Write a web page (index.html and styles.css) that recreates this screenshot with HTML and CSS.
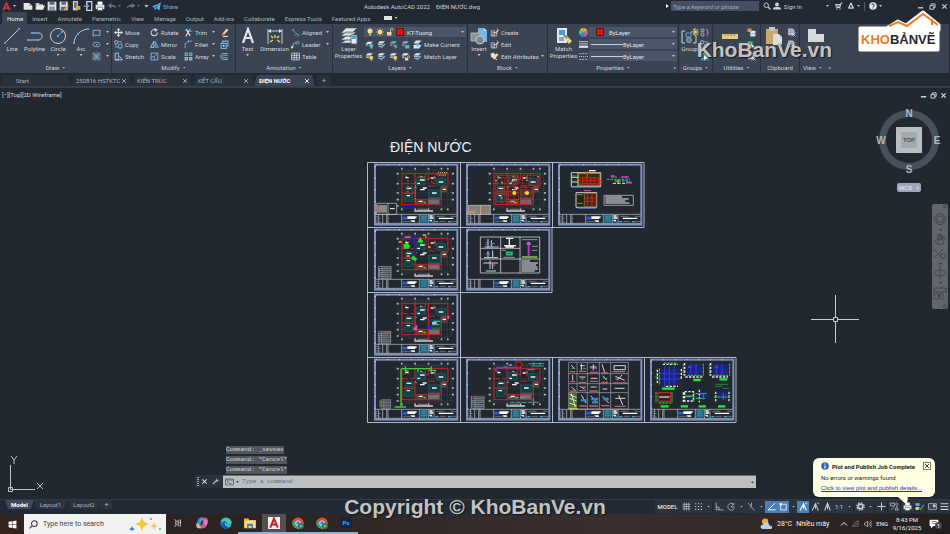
FILE: index.html
```html
<!DOCTYPE html>
<html lang="en">
<head>
<meta charset="utf-8">
<title>Autodesk AutoCAD 2022 - ĐIỆN NƯỚC.dwg</title>
<link rel="stylesheet" href="styles.css">
</head>
<body>
<svg class="sprite" aria-hidden="true">
  <symbol id="new" viewBox="0 0 16 16"><path d="M1 3h9l5 5v6H1z" fill="#e4e4e2"/><path d="M10 3v5h5" fill="#a5a9ae"/></symbol>
  <symbol id="open" viewBox="0 0 16 16"><path d="M1 13V3h5l2 2h5v3" fill="#c9cac9"/><path d="M1 14l3-7h12l-3 7z" fill="#ecebe6"/></symbol>
  <symbol id="save" viewBox="0 0 16 16"><path d="M1 1h13l1 1v13H1z" fill="#dfe0e0"/><path d="M4 1h8v5H4zM4 9h8v6H4z" fill="#5d6672"/><path d="M5 11h6M5 13h6" stroke="#e8e8e8"/></symbol>
  <symbol id="saveas" viewBox="0 0 16 16"><path d="M1 1h13v14H1z" fill="#dfe0e0"/><path d="M4 1h7v5H4zM3 9h8v6H3z" fill="#5d6672"/><path d="M7 14l7-8 2 2-7 7z" fill="#e0a04b"/></symbol>
  <symbol id="mobile" viewBox="0 0 16 16"><path d="M3 0h8v15H3z" fill="#cfcfce"/><path d="M5 2h4v9H5z" fill="#5b6470"/><path d="M8 8h7v6H8z" fill="#d8a44b"/></symbol>
  <symbol id="cloud" viewBox="0 0 16 16"><path d="M6 1h8v14H6z" fill="none" stroke="#d8dde2" stroke-width="2"/><path d="M1 8h8M6 5l3 3-3 3" fill="none" stroke="#57aee8" stroke-width="2"/></symbol>
  <symbol id="print" viewBox="0 0 16 16"><path d="M4 1h8v5H4z" fill="#fff"/><path d="M1 6h14v7H1z" fill="#dde1e4"/><path d="M4 10h8v5H4z" fill="#fff" stroke="#59616b"/></symbol>
  <symbol id="undo" viewBox="0 0 16 16"><path d="M1 7l6-4v3c5 0 8 2 8 6-2-3-4-3-8-3v3z" fill="currentColor"/></symbol>
  <symbol id="redo" viewBox="0 0 16 16"><path d="M15 7L9 3v3C4 6 1 8 1 12c2-3 4-3 8-3v3z" fill="currentColor"/></symbol>
  <symbol id="plane" viewBox="0 0 16 16"><path d="M0 8L16 1l-3 14-5-4-3 4-1-5z" fill="#55aee6"/><path d="M4 10l9-7-5 8" fill="#2d6f9f"/></symbol>
  <symbol id="search" viewBox="0 0 16 16"><circle cx="6.500" cy="6.500" r="4.500" fill="none" stroke="currentColor" stroke-width="1.800"/><path d="M10 10l5 5" stroke="currentColor" stroke-width="2.200"/></symbol>
  <symbol id="find" viewBox="0 0 16 16"><circle cx="9.500" cy="6.500" r="5" fill="none" stroke="currentColor" stroke-width="1.800"/><path d="M6 10l-5 5" stroke="currentColor" stroke-width="2"/></symbol>
  <symbol id="person" viewBox="0 0 16 16"><circle cx="8" cy="5" r="4" fill="currentColor"/><path d="M0 15c0-5 4-5 8-5s8 0 8 5z" fill="currentColor"/></symbol>
  <symbol id="cart" viewBox="0 0 16 16"><path d="M15 2h-3l-2 9H3L1 5h10" fill="none" stroke="currentColor" stroke-width="2"/><path d="M3 7h8M4 9h6" stroke="currentColor"/><circle cx="4" cy="14" r="1.500" fill="currentColor"/><circle cx="10" cy="14" r="1.500" fill="currentColor"/></symbol>
  <symbol id="auto" viewBox="0 0 16 16"><path d="M8 2L3 13M8 2l5 11M3 10c3 3 7 3 10 0" fill="none" stroke="currentColor" stroke-width="2.600"/></symbol>
  <symbol id="help" viewBox="0 0 16 16"><circle cx="8" cy="8" r="7.500" fill="#e6e7e8"/><path d="M5.500 6c0-3 5-3 5 0 0 2-2.500 2-2.500 4M8 11v2" fill="none" stroke="#222933" stroke-width="1.800"/></symbol>
  <symbol id="min" viewBox="0 0 16 16"><path d="M2 11h12" stroke="currentColor" stroke-width="3"/></symbol>
  <symbol id="restore" viewBox="0 0 16 16"><path d="M5 5V2h9v8h-3M2 6h9v8H2z" fill="none" stroke="currentColor" stroke-width="2"/></symbol>
  <symbol id="close" viewBox="0 0 16 16"><path d="M3 3l10 10M13 3L3 13" stroke="currentColor" stroke-width="2.400"/></symbol>
  <symbol id="line" viewBox="0 0 18 18"><path d="M2 16L16 2" stroke="#c5cbd2"/><path d="M1 15h2v2H1zM15 1h2v2h-2z" fill="#58a8dc"/></symbol>
  <symbol id="polyline" viewBox="0 0 18 18"><path d="M2 13h10c6 0 5-8 0-7M6 6h6" fill="none" stroke="#c5cbd2"/><path d="M1 12h2v2H1zM11 12h2v2h-2zM5 5h2v2H5z" fill="#58a8dc"/></symbol>
  <symbol id="circle" viewBox="0 0 18 18"><circle cx="9" cy="9" r="7.500" fill="none" stroke="#c5cbd2"/><path d="M9 9l4-4" stroke="#58a8dc"/><path d="M8 8h2v2H8zM12 4h2v2h-2z" fill="#58a8dc"/></symbol>
  <symbol id="arc" viewBox="0 0 18 18"><path d="M2 16C3 8 8 3 16 2" fill="none" stroke="#c5cbd2"/><path d="M1 15h2v2H1zM5 6h2v2H5zM15 1h2v2h-2z" fill="#58a8dc"/></symbol>
  <symbol id="rect" viewBox="0 0 16 16"><path d="M2 4h12v9H2z" fill="none" stroke="#c9ced4" stroke-width="1.300"/><path d="M1 12h3v3H1zM12 3h3v3h-3z" fill="#58a8dc"/></symbol>
  <symbol id="ellipse" viewBox="0 0 16 16"><ellipse cx="8" cy="8" rx="6.500" ry="4" fill="none" stroke="#8bbbd9" stroke-width="1.400"/><path d="M7 7h3v3H7z" fill="#58a8dc"/></symbol>
  <symbol id="hatch" viewBox="0 0 16 16"><path d="M2 2h12v12H2z" fill="none" stroke="#c9ced4" stroke-dasharray="3 1.500"/><path d="M5 5h6v6H5z" fill="#589fd0"/><path d="M1 5h14M1 11h14M5 1v14M11 1v14" stroke="#9fb4c5" stroke-width=".8"/></symbol>
  <symbol id="move" viewBox="0 0 16 16"><path d="M8 1v14M1 8h14" stroke="#e2e6ea" stroke-width="2"/><path d="M8 0l3 4H5zM8 16l3-4H5zM0 8l4-3v6zM16 8l-4-3v6z" fill="#e2e6ea"/></symbol>
  <symbol id="rotate" viewBox="0 0 16 16"><path d="M13 8a5.500 5.500 0 1 1-4-5" fill="none" stroke="#d6dbe0" stroke-width="1.800"/><path d="M8 0l6 3-5 4z" fill="#d6dbe0"/></symbol>
  <symbol id="trim" viewBox="0 0 16 16"><path d="M4 2l7 12M3 15L10 3" stroke="#e2e6ea" stroke-width="2"/><path d="M11 1v5h4M1 4h4" stroke="#62ade0" fill="none" stroke-width="1.500"/></symbol>
  <symbol id="eraser" viewBox="0 0 16 16"><path d="M4 10l8-9 3 3-8 8z" fill="#ecd0a0"/><path d="M2 11l3-2 3 3-3 2z" fill="#d7644e"/><path d="M5 15h9" stroke="#e3e6e8" stroke-width="2"/></symbol>
  <symbol id="copy" viewBox="0 0 16 16"><circle cx="4" cy="4" r="3" fill="none" stroke="#c9ced4" stroke-width="1.500"/><path d="M8 3h5v4M3 8v5h3" fill="none" stroke="#c9ced4"/><circle cx="11" cy="11" r="3.500" fill="#26445b" stroke="#62ade0" stroke-width="2"/></symbol>
  <symbol id="mirror" viewBox="0 0 16 16"><path d="M7 2v11H1z" fill="none" stroke="#d6dbe0" stroke-width="1.400"/><path d="M9 2v11h6z" fill="#3d739b" stroke="#62ade0" stroke-width="1.400"/></symbol>
  <symbol id="fillet" viewBox="0 0 16 16"><path d="M2 15V10C2 5 5 3 9 2h6" fill="none" stroke="#8aa9bf" stroke-width="1.500"/><path d="M1 7h3M8 1v4" stroke="#62ade0" stroke-width="2"/></symbol>
  <symbol id="box" viewBox="0 0 16 16"><path d="M2 6h9v9H2zM5 6V2h9v9h-3" fill="none" stroke="#72b1d9" stroke-width="2"/><path d="M5 9h3v3H5z" fill="#d8dee3"/></symbol>
  <symbol id="stretch" viewBox="0 0 16 16"><path d="M2 14V2h6v12zM8 8h2l5 6H2" fill="none" stroke="#d0d5db" stroke-width="1.500"/><path d="M8 1v12" stroke="#62ade0" stroke-width="2"/></symbol>
  <symbol id="scale" viewBox="0 0 16 16"><path d="M2 2h12v12H2z" fill="none" stroke="#c9ced4" stroke-width="1.300"/><path d="M2 8h6v6H2z" fill="#30506a" stroke="#62ade0" stroke-width="1.500"/><path d="M9 7l3-3" stroke="#e5e5e5"/></symbol>
  <symbol id="array" viewBox="0 0 16 16"><path d="M2 2h4v4H2zM10 2h4v4h-4z" fill="none" stroke="#62ade0" stroke-width="1.800"/><path d="M2 10h4v4H2zM10 10h4v4h-4z" fill="none" stroke="#b7c4ce" stroke-width="1.800"/></symbol>
  <symbol id="offset" viewBox="0 0 16 16"><path d="M14 3H6C0 3 0 13 6 13h8" fill="none" stroke="#c9ced4" stroke-width="1.500"/><path d="M14 6H7c-3 0-3 4 0 4h7" fill="none" stroke="#62ade0" stroke-width="1.500"/></symbol>
  <symbol id="bigA" viewBox="0 0 18 18"><path d="M4 16L9 2l5 14M6 11h6" fill="none" stroke="#e6e9ec" stroke-width="2.200"/></symbol>
  <symbol id="dim" viewBox="0 0 20 18"><path d="M3 2v15M17 2v15M3 4h14" stroke="#c5cbd2" fill="none"/><path d="M3 4l3-2v4zM17 4l-3-2v4z" fill="#e2e6ea"/><path d="M5 15l3-2M15 15l-3-2M6 9l2 2M14 9l-2 2M10 8v3" stroke="#f3cf6a" stroke-width="1.400"/></symbol>
  <symbol id="aligned" viewBox="0 0 16 16"><path d="M3 3l10 10M1 5l4-4M11 15l4-4" stroke="#6eb3e0" stroke-width="1.500"/><path d="M5 10l4 4" stroke="#bfc5cb"/></symbol>
  <symbol id="leader" viewBox="0 0 16 16"><path d="M2 14c1-6 3-9 7-9" fill="none" stroke="#c9ced4" stroke-width="1.500"/><path d="M0 11l5 1-4 4z" fill="#e2e6ea"/><circle cx="12" cy="5" r="2.500" fill="none" stroke="#6eb3e0" stroke-width="1.500"/></symbol>
  <symbol id="table" viewBox="0 0 16 16"><path d="M1 2h14v12H1zM1 6h14M1 10h14M6 2v12M10 2v12" fill="none" stroke="#d0d5da" stroke-width="1.400"/></symbol>
  <symbol id="layers" viewBox="0 0 18 18"><path d="M6 1h11l-5 5H1zM6 5h10l-5 4H1zM6 9h7l-2 4H1zM6 13h6v3H1z" fill="#e3e5e6" stroke="#4d5764" stroke-width=".6"/><path d="M11 8h6v9h-6z" fill="#e8edf1" stroke="#476c8b"/><path d="M12 9h4v3h-4z" fill="#4ba3e0"/></symbol>
  <symbol id="bulb" viewBox="0 0 16 16"><circle cx="8" cy="6" r="5" fill="#fce08c"/><path d="M6 11h4v4H6z" fill="#d9c193"/></symbol>
  <symbol id="sun" viewBox="0 0 16 16"><path d="M8 0v16M0 8h16M2 2l12 12M14 2L2 14" stroke="#e7b655" stroke-width="1.500"/><circle cx="8" cy="8" r="4.500" fill="#fbd77a"/></symbol>
  <symbol id="lock" viewBox="0 0 16 16"><path d="M9 8V3c0-3 5-3 5 0v2" fill="none" stroke="#e9c685" stroke-width="1.800"/><path d="M2 8h9v7H2z" fill="#f4d79b"/></symbol>
  <symbol id="lay1" viewBox="0 0 16 16"><path d="M5 3h9l-4 4H1z" fill="#e5e7e8"/><path d="M1 8h5v2H1z" fill="#b9bfc4"/><circle cx="11" cy="10" r="3.500" fill="#58b5d7"/><path d="M10 13h3v2h-3z" fill="#cad1d6"/></symbol>
  <symbol id="lay2" viewBox="0 0 16 16"><path d="M5 2h9l-4 4H1z" fill="#e5e7e8"/><path d="M2 8h8M2 11h6" stroke="#b9bfc4" stroke-width="2"/><path d="M7 14l7-7" stroke="#73b6e0" stroke-width="2.500"/></symbol>
  <symbol id="lay3" viewBox="0 0 16 16"><path d="M5 2h9l-4 4H1z" fill="#74b5bc"/><path d="M8 11h7M11 8v7M9 8l5 6" stroke="#60c3cc" stroke-width="1.500"/><path d="M2 8h4v2H2z" fill="#b9bfc4"/></symbol>
  <symbol id="lay4" viewBox="0 0 16 16"><path d="M5 2h9l-4 4H1z" fill="#8eb9c6"/><path d="M7 9h8v6H7z" fill="#61b6bd"/><path d="M2 8h4v2H2z" fill="#b9bfc4"/></symbol>
  <symbol id="lay5" viewBox="0 0 16 16"><path d="M5 1h10l-5 5H1zM1 9h14l-4 6H1z" fill="#dfe6eb"/><path d="M4 8l4-4 4 4-4 4z" fill="#6aaedd"/></symbol>
  <symbol id="lay6" viewBox="0 0 16 16"><path d="M5 2h9l-4 4H1zM2 8h5v2H2z" fill="#e5e7e8"/><circle cx="11" cy="10" r="3.500" fill="#f6c96d"/><path d="M10 13h3v2h-3z" fill="#cad1d6"/></symbol>
  <symbol id="lay7" viewBox="0 0 16 16"><path d="M5 2h9l-4 4H1zM2 8h4v2H2z" fill="#e5e7e8"/><path d="M7 10h6v5H7z" fill="#f4d79b"/><path d="M12 10V8c0-2 3-2 3 0v2" fill="none" stroke="#e9c685" stroke-width="1.500"/></symbol>
  <symbol id="insert" viewBox="0 0 18 18"><path d="M8 1h6l3 3v11H8z" fill="#6db8ec"/><path d="M14 1v3h3" fill="#c6e5f9"/><path d="M1 6h9v8H1z" fill="#8e949c" stroke="#aeb3b9"/><circle cx="10" cy="13" r="4" fill="#7c858e" stroke="#c5c9cd"/></symbol>
  <symbol id="create" viewBox="0 0 16 16"><path d="M2 5h6v9H2zM5 8h7v6H5z" fill="none" stroke="#bcc3ca" stroke-width="1.500"/><path d="M9 9l5-7 2 2-5 6z" fill="#f0c990"/><path d="M12 1l2-1v4" fill="#e46b49"/></symbol>
  <symbol id="attr" viewBox="0 0 16 16"><path d="M1 3l5-2 4 4-3 8-5-5z" fill="#e2e6ea"/><path d="M6 8l6-6 3 3-7 8z" fill="#ffd5a0"/><path d="M9 11l3 3" stroke="#d8dde2" stroke-width="2"/></symbol>
  <symbol id="match" viewBox="0 0 18 18"><path d="M2 1h10v15H2z" fill="#e4e7e9"/><path d="M4 3h6v5H4z" fill="#4c9bd6"/><path d="M4 11h5M4 13h5" stroke="#505c6a"/><path d="M8 9l3-1 6 6-3 3z" fill="#f0d38a"/><path d="M9 8l3 3" stroke="#7a8796" stroke-width="2"/></symbol>
  <symbol id="wheel" viewBox="0 0 16 16"><path d="M8 8V0a8 8 0 0 1 7 4z" fill="#f2a23a"/><path d="M8 8l7-4a8 8 0 0 1 0 8z" fill="#e2577a"/><path d="M8 8l7 4a8 8 0 0 1-7 4z" fill="#a265c9"/><path d="M8 8v8a8 8 0 0 1-7-4z" fill="#3c8be0"/><path d="M8 8l-7 4a8 8 0 0 1 0-8z" fill="#3cbfa8"/><path d="M8 8L1 4a8 8 0 0 1 7-4z" fill="#b5ce43"/></symbol>
  <symbol id="weights" viewBox="0 0 16 16"><path d="M0 3h16M0 7h16" stroke="#dfe3e6" stroke-width="1.500"/><path d="M0 12h16" stroke="#dfe3e6" stroke-width="4"/></symbol>
  <symbol id="types" viewBox="0 0 16 16"><path d="M0 3h16M0 13h16" stroke="#b8c0c8" stroke-width="1.500" stroke-dasharray="4 1"/><path d="M0 8h16" stroke="#b8c0c8" stroke-width="2" stroke-dasharray="2 1.500"/></symbol>
  <symbol id="group" viewBox="0 0 18 18"><path d="M4 4H1v12h3M12 16h3V8" fill="none" stroke="#d0d5da"/><path d="M5 6h5v4H5z" fill="none" stroke="#58a8dc"/><circle cx="8" cy="13" r="2.500" fill="#69727e" stroke="#9ba4ae"/><path d="M14 1v8M10 5h8M12 2l5 6M17 2l-5 6" stroke="#f6cf72"/></symbol>
  <symbol id="ungroup" viewBox="0 0 16 16"><path d="M2 2h5v4H2zM2 9h5v5H2z" fill="none" stroke="#bfc6cc" stroke-width="1.300"/><path d="M10 2h3v12M13 5l2 3-2 3" fill="none" stroke="#db7b72" stroke-width="1.500"/></symbol>
  <symbol id="gsel" viewBox="0 0 16 16"><path d="M0 0h16v16H0z" fill="#35667e"/><path d="M3 3h8v9H3z" fill="none" stroke="#71c6dc" stroke-width="1.500"/><path d="M7 5l7 7h-4l-3 3z" fill="#fff"/></symbol>
  <symbol id="ruler" viewBox="0 0 18 18"><path d="M1 7h16v5H1z" fill="#ecc87e"/><path d="M4 7v2M7 7v2M10 7v2M13 7v2" stroke="#9b7732"/></symbol>
  <symbol id="calc" viewBox="0 0 16 16"><path d="M6 5h9v10H6z" fill="#e7eaec"/><path d="M1 1h7v6H1z" fill="#d3a75d"/><path d="M8 9h2v2H8zM12 9h2v2h-2z" fill="#4788b6"/></symbol>
  <symbol id="qsel" viewBox="0 0 16 16"><path d="M1 2h10v10H1z" fill="#2f8f6a"/><path d="M3 4h5v5H3z" fill="none" stroke="#a7e0c7"/><path d="M7 6l7 7h-4l-3 3z" fill="#fff"/></symbol>
  <symbol id="paste" viewBox="0 0 18 18"><path d="M1 2h12v15H1z" fill="#cda66e"/><path d="M4 0h6v4H4z" fill="#c3c6c9"/><path d="M8 7h6l3 3v8H8z" fill="#dadcdd"/></symbol>
  <symbol id="cut" viewBox="0 0 16 16"><path d="M2 1h8l3 3v9H2z" fill="#b9bec3"/><path d="M5 5h5M5 8h5" stroke="#5d6672"/><path d="M8 8l7 7M15 8l-7 7" stroke="#e2e2e2" stroke-width="1.500"/></symbol>
  <symbol id="base" viewBox="0 0 18 18"><path d="M1 2h8v5h8v8H1z" fill="#d7d9da"/></symbol>
  <symbol id="info" viewBox="0 0 16 16"><circle cx="8" cy="8" r="7.500" fill="#2c63b8"/><path d="M8 7v6M8 3v2" stroke="#fff" stroke-width="2.500"/></symbol>
  <symbol id="wrench" viewBox="0 0 16 16"><path d="M2 14l7-7" stroke="#c8ccd1" stroke-width="2.600"/><path d="M13 1l-3 3 2 2 3-3c1 5-3 7-6 5-2-3 0-7 4-7" fill="#c8ccd1"/></symbol>
  <symbol id="prompt" viewBox="0 0 18 16"><path d="M1 2h16v12H1zM1 4h16" fill="none" stroke="#50555c" stroke-width="1.500"/><path d="M4 6l3 2-3 3M8 11h5" fill="none" stroke="#50555c" stroke-width="1.500"/></symbol>
  <symbol id="grid" viewBox="0 0 16 16"><path d="M4 1v14M8 1v14M12 1v14M1 4h14M1 8h14M1 12h14" stroke="currentColor" stroke-width="1.200"/></symbol>
  <symbol id="dots" viewBox="0 0 16 16"><path d="M2 3h13M2 8h13M2 13h13" stroke="currentColor" stroke-width="2" stroke-dasharray="2 3"/></symbol>
  <symbol id="ortho" viewBox="0 0 16 16"><path d="M2 1v13h13M2 9h5v5" fill="none" stroke="currentColor" stroke-width="1.300"/></symbol>
  <symbol id="polar" viewBox="0 0 16 16"><path d="M13 6a6 6 0 1 0 0 5M7 9h7M7 9l6-7" fill="none" stroke="currentColor" stroke-width="1.300"/></symbol>
  <symbol id="iso" viewBox="0 0 16 16"><path d="M2 2l11 13M8 1v7" stroke="currentColor" stroke-width="1.300"/><path d="M4 13l5-6" stroke="#9b6e52"/></symbol>
  <symbol id="angle" viewBox="0 0 16 16"><path d="M14 2L2 14h13" fill="none" stroke="#fff" stroke-width="1.600"/></symbol>
  <symbol id="osnap" viewBox="0 0 16 16"><path d="M3 4h10v10H3z" fill="none" stroke="#fff" stroke-width="1.400"/><path d="M1 2h4v4H1z" fill="#fff"/></symbol>
  <symbol id="anno" viewBox="0 0 16 16"><path d="M2 15L8 3l5 12M8 4v8" fill="none" stroke="currentColor" stroke-width="1.900"/><path d="M11 1l3 3M14 1l-3 3" stroke="currentColor" stroke-width="1.300"/></symbol>
  <symbol id="anno2" viewBox="0 0 16 16"><path d="M3 15L8 2l5 13M8 4v9" fill="none" stroke="currentColor" stroke-width="1.900"/></symbol>
  <symbol id="gear" viewBox="0 0 16 16"><circle cx="8" cy="8" r="6.500" fill="none" stroke="currentColor" stroke-width="2.200" stroke-dasharray="2.900 2.200"/><circle cx="8" cy="8" r="4" fill="none" stroke="currentColor" stroke-width="3"/></symbol>
  <symbol id="plus" viewBox="0 0 16 16"><path d="M8 1v14M1 8h14" stroke="currentColor" stroke-width="1.800"/></symbol>
  <symbol id="shapes" viewBox="0 0 16 16"><path d="M1 2h7v5H1zM9 14l3-6 3 6z" fill="none" stroke="currentColor" stroke-width="1.300"/><circle cx="12" cy="4" r="2" fill="none" stroke="currentColor"/><path d="M2 14l5-5" stroke="currentColor"/></symbol>
  <symbol id="checks" viewBox="0 0 16 16"><path d="M1 2h7v5H1z" fill="#69b0e4"/><path d="M1 9h6v5H1z" fill="#ddd6a9"/><path d="M7 9l3 4 6-8" fill="none" stroke="#44a865" stroke-width="2"/></symbol>
  <symbol id="tray" viewBox="0 0 16 16"><path d="M1 3h14v10H1z" fill="none" stroke="currentColor" stroke-width="1.300"/><path d="M9 5h4v4H9zM3 8l3 3" fill="currentColor" stroke="currentColor"/></symbol>
  <symbol id="burger" viewBox="0 0 16 16"><path d="M1 3h14M1 8h14M1 13h14" stroke="currentColor" stroke-width="2"/></symbol>
  <symbol id="win" viewBox="0 0 16 16"><path d="M1 3l6-1v5.500H1zM8 2l7-1v6.500H8zM1 8.500h6V14l-6-1zM8 8.500h7V15l-7-1z" fill="#fff"/></symbol>
  <symbol id="taskview" viewBox="0 0 16 16"><path d="M3 1v3h7V1M3 15v-3h7v3M3 6h7v4H3zM13 1v14M1 1v1M1 14v1" fill="none" stroke="#dfdfdf" stroke-width="1.300"/><path d="M12 5h2v3h-2z" fill="#fff"/></symbol>
  <symbol id="copilot" viewBox="0 0 16 16"><path d="M5 1h6l-4 14H3C0 14 0 11 1 8l2-5z" fill="#2d88dd"/><path d="M5 1h6l2 3-4 2-4 2z" fill="#38a6c5"/><path d="M11 15H5l4-14h4c3 1 3 4 2 7l-2 5z" fill="#c757b8"/><path d="M9 6l5-3c3 2 1 7 0 9z" fill="#df80a0"/><path d="M3 8l4 7H3C0 14 0 11 1 8z" fill="#efb44f"/><path d="M7 5h3l-2 6H6z" fill="#372c37"/></symbol>
  <symbol id="edge" viewBox="0 0 16 16"><circle cx="8" cy="8" r="7.500" fill="#1786cf"/><path d="M1 7C2-1 14-1 15.500 7c0 4-5 5-6 3 2-4-5-6-8.500-3z" fill="#48c7a8"/><path d="M2 11c0-6 6-5 6-5-3 3 0 8 5 7-4 4-10 3-11-2z" fill="#145ba4"/><path d="M7 8c0 4 4 5 7 4" fill="none" stroke="#d7eef8"/></symbol>
  <symbol id="folder" viewBox="0 0 16 16"><path d="M0 2h6l1 2h9v11H0z" fill="#e7b54a"/><path d="M1 5h14v9H1z" fill="#fbdc84"/><path d="M4 9h8v6h-2v-3H6v3H4z" fill="#4688bd"/></symbol>
  <symbol id="acad" viewBox="0 0 16 16"><path d="M0 0h16v16H0z" fill="#f4efee"/><path d="M3 14L8 2l5 12M5 10h6" fill="none" stroke="#bb2530" stroke-width="2.600"/></symbol>
  <symbol id="chrome" viewBox="0 0 16 16"><circle cx="8" cy="8" r="7.500" fill="#dc4b3d"/><path d="M8 8L1.500 4A7.500 7.500 0 0 0 8 15.500z" fill="#36a365"/><path d="M8 8h7a7.500 7.500 0 0 1-7 7.500z" fill="#f3c43d"/><circle cx="8" cy="8" r="3.500" fill="#fff"/><circle cx="8" cy="8" r="2.600" fill="#4385eb"/><circle cx="12" cy="12" r="4" fill="#11715e"/><circle cx="12" cy="12" r="1.500" fill="none" stroke="#d9ede7" stroke-width=".8"/></symbol>
  <symbol id="weather" viewBox="0 0 18 16"><circle cx="7" cy="5" r="4.500" fill="#f1a93b"/><path d="M3 15c-4-2-2-7 2-6 2-5 8-3 8 1 5 0 5 5 1 5z" fill="#b9d3ef"/></symbol>
  <symbol id="wifi" viewBox="0 0 16 16"><path d="M2 14C2 8 8 2 14 2M6 14c0-4 4-8 8-8M10 14c0-2 2-4 4-4" fill="none" stroke="#9a9492" stroke-width="1.500"/></symbol>
  <symbol id="sound" viewBox="0 0 16 16"><path d="M1 6h2l4-4v12l-4-4H1z" fill="none" stroke="#ddd" stroke-width="1.200"/><path d="M9 5c2 2 2 4 0 6M11 3c4 3 4 7 0 10M13 1c5 5 5 9 0 14" fill="none" stroke="#ddd" stroke-width="1.200"/></symbol>
  <symbol id="note" viewBox="0 0 16 16"><path d="M1 1h14v10H7l-4 4v-4H1z" fill="#fff"/><path d="M4 4h8M4 7h8" stroke="#3a302e"/></symbol>

  <!-- Sheet border with its title block, shared by every sheet -->
  <symbol id="sheet" viewBox="0 0 276 195">
    <rect x="21" y="8" width="247" height="180" fill="none" stroke="#7f8fbd" stroke-width="6"/>
    <path d="M23 8h243" stroke="#dfe3ef" stroke-width="3" stroke-dasharray="3 32"/>
    <path d="M22 12v174" stroke="#dfe3ef" stroke-width="3" stroke-dasharray="3 32"/>
    <path d="M24 157h242M24 184h242M32 157v27M44 157v27M56 157v27M60 157v27M101 157v27M154 157v27M181 157v27M198 157v27" stroke="#c4c8d0" stroke-width="2"/>
    <path d="M24 163h7M24 169h14M24 175h8M24 180h14M104 178h22M205 163h25M248 163h17M215 178h18M248 178h17" stroke="#8b9099" stroke-width="2"/>
    <path d="M103 164h14v9h-14z" fill="#2b55cf"/>
    <path d="M118 165h28M118 169h24M212 169h44M184 162h10M184 168h12M184 175h8M131 178h10" stroke="#fff" stroke-width="4"/>
    <path d="M128 174h12v5h-12z" fill="#a4cfe4"/>
    <path d="M157 159h22v23h-22z" fill="#246f8b"/>
    <path d="M159 163h18M159 169h14M159 175h18" stroke="#4fa0bb" stroke-width="1.500"/>
    <path d="M186 178h8M202 179h9M240 179h8" stroke="#34b0e2" stroke-width="4"/>
  </symbol>

  <!-- Ground floor plan: axes, furniture, walls -->
  <symbol id="plan" viewBox="0 0 276 195">
    <path d="M101 18v125M141 18v125M181 18v125M220 18v125M239 18v125M86 35h170M86 65h170M86 93h170M86 113h170M86 132h170" stroke="#4d4b4b"/>
    <path d="M101 24h138M101 30h138M92 35v97M250 35v97M101 138h138" stroke="#77706a" stroke-dasharray="6 3"/>
    <g fill="none" stroke="#b9b9b9" stroke-width="2.500"><path d="M99 20h5M139 20h5M179 20h5M218 20h5M237 20h5M99 142h5M139 142h5M179 142h5M218 142h5M237 142h5" stroke-width="5"/><path d="M86 35h6M86 65h6M86 93h6M86 113h6M86 132h6M252 35h6M252 65h6M252 93h6M252 113h6" stroke-width="5"/></g>
    <path d="M113 74h22v20h-22zM110 95h24v23h-24zM145 47h26v22h-26zM206 50h27v20h-27zM182 84h36v23h-36z" fill="#123f43" stroke="#276263" stroke-width="2"/>
    <path d="M180 109h35v18h-35z" fill="#67676a"/>
    <path d="M144 115h34v13h-34z" fill="#59442c"/>
    <path d="M184 113h28M184 118h28M184 123h28" stroke="#929296"/>
    <path d="M218 76h18v14h-18z" fill="#4d3f32" stroke="#99704a"/>
    <g fill="none" stroke="#bd2528" stroke-width="3">
      <path d="M102 35h138v39h-20v54H102z"/>
      <path d="M102 65h17M128 65h13M141 35v28M141 72v56M181 35v20M181 72h20M201 40v18M102 93h39M141 112h38M181 112h39M172 35v18h10"/>
    </g>
    <path d="M112 47h10M116 79h14M116 101h10M156 54h14M164 78h12M156 83h14M212 60h14M192 93h14M152 118h12M188 48h9M224 82h10M148 64h8" stroke="#f2f2f2" stroke-width="4"/>
    <path d="M112 41l4 4M156 42l8 3M198 44l5 4M167 122h5M141 74l5 3" stroke="#d0b66d" stroke-width="3"/>
    <path d="M139 147h56" stroke="#e8e8e8" stroke-width="4"/><path d="M149 142h28" stroke="#b4b4b4" stroke-width="2"/>
  </symbol>

  <!-- Legend table in the lower left corner of a sheet -->
  <symbol id="legend" viewBox="0 0 60 40">
    <path d="M1 1h38v37H1zM1 8h38M1 14h38M1 20h38M1 26h38M1 32h38M12 1v37" fill="none" stroke="#aeb0b4" stroke-width="2"/>
    <path d="M15 5h22M15 11h18M15 17h22M15 23h14M15 29h22M15 35h18" stroke="#777a80" stroke-width="2"/>
  </symbol>
</svg>

<header class="titlebar">
  <div class="quick">
    <button class="app" aria-label="Application menu"><svg viewBox="0 0 16 16"><path d="M2 15L8 2l6 13M4 11h8" fill="none" stroke="#d3323b" stroke-width="3"/></svg></button><i class="caret"></i>
    <button class="ic" aria-label="New"><svg><use href="#new"/></svg></button>
    <button class="ic" aria-label="Open"><svg><use href="#open"/></svg></button>
    <button class="ic" aria-label="Save"><svg><use href="#save"/></svg></button>
    <button class="ic" aria-label="Save as"><svg><use href="#saveas"/></svg></button>
    <button class="ic" aria-label="Open from mobile"><svg><use href="#mobile"/></svg></button>
    <button class="ic" aria-label="Save to mobile"><svg><use href="#cloud"/></svg></button>
    <button class="ic" aria-label="Plot"><svg><use href="#print"/></svg></button>
    <button class="ic dim" aria-label="Undo"><svg><use href="#undo"/></svg></button><i class="caret dim"></i>
    <button class="ic dim" aria-label="Redo"><svg><use href="#redo"/></svg></button><i class="caret dim"></i>
    <i class="caret bar"></i>
    <button class="share"><svg><use href="#plane"/></svg>Share</button>
  </div>
  <h1 class="title"><span>Autodesk AutoCAD 2022</span><span>ĐIỆN NƯỚC.dwg</span></h1>
  <div class="account">
    <i class="tri"></i>
    <input class="keyword" type="text" placeholder="Type a keyword or phrase" aria-label="Search help">
    <button class="ic" aria-label="Search"><svg><use href="#search"/></svg></button>
    <button class="sign"><svg><use href="#person"/></svg>Sign In</button>
    <i class="caret"></i>
    <button class="ic" aria-label="Store"><svg><use href="#cart"/></svg></button>
    <button class="ic" aria-label="Apps"><svg><use href="#auto"/></svg></button><i class="caret"></i>
    <i class="rule"></i>
    <button class="ic" aria-label="Help"><svg><use href="#help"/></svg></button><i class="caret"></i>
  </div>
  <div class="wincontrols">
    <button class="ic" aria-label="Minimize"><svg><use href="#min"/></svg></button>
    <button class="ic" aria-label="Restore"><svg><use href="#restore"/></svg></button>
    <button class="ic" aria-label="Close"><svg><use href="#close"/></svg></button>
  </div>
</header>

<nav class="menu">
  <a class="on" href="#home">Home</a><a href="#insert">Insert</a><a href="#annotate">Annotate</a><a href="#parametric">Parametric</a><a href="#view">View</a><a href="#manage">Manage</a><a href="#output">Output</a><a href="#addins">Add-ins</a><a href="#collaborate">Collaborate</a><a href="#express">Express Tools</a><a href="#featured">Featured Apps</a>
  <button class="ribbon-toggle" aria-label="Minimize ribbon"><b></b><i class="caret"></i></button>
</nav>

<main class="ribbon">
  <section class="panel draw">
    <div class="tools">
      <button class="big"><svg><use href="#line"/></svg>Line</button>
      <button class="big"><svg><use href="#polyline"/></svg>Polyline</button>
      <button class="big"><svg><use href="#circle"/></svg>Circle<i class="caret"></i></button>
      <button class="big"><svg><use href="#arc"/></svg>Arc<i class="caret"></i></button>
      <div class="col">
        <button class="tool" aria-label="Rectangle"><svg><use href="#rect"/></svg><i class="caret"></i></button>
        <button class="tool" aria-label="Ellipse"><svg><use href="#ellipse"/></svg><i class="caret"></i></button>
        <button class="tool" aria-label="Hatch"><svg><use href="#hatch"/></svg><i class="caret"></i></button>
      </div>
    </div>
    <h2>Draw<i class="caret"></i></h2>
  </section>
  <section class="panel modify">
    <div class="tools">
      <div class="col">
        <button class="tool"><svg><use href="#move"/></svg>Move</button>
        <button class="tool"><svg><use href="#copy"/></svg>Copy</button>
        <button class="tool"><svg><use href="#stretch"/></svg>Stretch</button>
      </div>
      <div class="col">
        <button class="tool"><svg><use href="#rotate"/></svg>Rotate</button>
        <button class="tool"><svg><use href="#mirror"/></svg>Mirror</button>
        <button class="tool"><svg><use href="#scale"/></svg>Scale</button>
      </div>
      <div class="col">
        <button class="tool"><svg><use href="#trim"/></svg>Trim<i class="caret"></i></button>
        <button class="tool"><svg><use href="#fillet"/></svg>Fillet<i class="caret"></i></button>
        <button class="tool"><svg><use href="#array"/></svg>Array<i class="caret"></i></button>
      </div>
      <div class="col">
        <button class="tool" aria-label="Erase"><svg><use href="#eraser"/></svg></button>
        <button class="tool" aria-label="Explode"><svg><use href="#box"/></svg></button>
        <button class="tool" aria-label="Offset"><svg><use href="#offset"/></svg></button>
      </div>
    </div>
    <h2>Modify<i class="caret"></i></h2>
  </section>
  <section class="panel annotation">
    <div class="tools">
      <button class="big"><svg><use href="#bigA"/></svg>Text<i class="caret"></i></button>
      <button class="big"><svg><use href="#dim"/></svg>Dimension</button>
      <div class="col">
        <button class="tool"><svg><use href="#aligned"/></svg>Aligned<i class="caret"></i></button>
        <button class="tool"><svg><use href="#leader"/></svg>Leader<i class="caret"></i></button>
        <button class="tool"><svg><use href="#table"/></svg>Table</button>
      </div>
    </div>
    <h2>Annotation<i class="caret"></i></h2>
  </section>
  <section class="panel layer">
    <div class="tools">
      <button class="big"><svg><use href="#layers"/></svg>Layer<br>Properties</button>
      <div class="col">
        <div class="combo">
          <svg><use href="#bulb"/></svg><svg><use href="#sun"/></svg><svg><use href="#lock"/></svg><b class="swatch"></b>
          <select aria-label="Layer"><option>KT-Tuong</option></select><i class="caret"></i>
        </div>
        <div class="strip">
          <button class="tool" aria-label="Layer off"><svg><use href="#lay1"/></svg></button><button class="tool" aria-label="Isolate"><svg><use href="#lay2"/></svg></button><button class="tool" aria-label="Freeze"><svg><use href="#lay3"/></svg></button><button class="tool" aria-label="Lock"><svg><use href="#lay4"/></svg></button><button class="tool"><svg><use href="#lay5"/></svg>Make Current</button>
        </div>
        <div class="strip">
          <button class="tool" aria-label="Layers on"><svg><use href="#lay6"/></svg></button><button class="tool" aria-label="Unisolate"><svg><use href="#lay2"/></svg></button><button class="tool" aria-label="Thaw"><svg><use href="#lay6"/></svg></button><button class="tool" aria-label="Unlock"><svg><use href="#lay7"/></svg></button><button class="tool"><svg><use href="#lay2"/></svg>Match Layer</button>
        </div>
      </div>
    </div>
    <h2>Layers<i class="caret"></i></h2>
  </section>
  <section class="panel block">
    <div class="tools">
      <button class="big"><svg><use href="#insert"/></svg>Insert<i class="caret"></i></button>
      <div class="col">
        <button class="tool"><svg><use href="#create"/></svg>Create</button>
        <button class="tool"><svg><use href="#create"/></svg>Edit</button>
        <button class="tool"><svg><use href="#attr"/></svg>Edit Attributes<i class="caret"></i></button>
      </div>
    </div>
    <h2>Block<i class="caret"></i></h2>
  </section>
  <section class="panel props">
    <div class="tools">
      <button class="big"><svg><use href="#match"/></svg>Match<br>Properties</button>
      <div class="col">
        <div class="prop"><svg><use href="#wheel"/></svg><div class="combo"><b class="swatch"></b><select aria-label="Object color"><option>ByLayer</option></select><i class="caret"></i></div></div>
        <div class="prop"><svg><use href="#weights"/></svg><div class="combo"><b class="stroke"></b><select aria-label="Lineweight"><option>ByLayer</option></select><i class="caret"></i></div></div>
        <div class="prop"><svg><use href="#types"/></svg><div class="combo"><b class="stroke"></b><select aria-label="Linetype"><option>ByLayer</option></select><i class="caret"></i></div></div>
      </div>
    </div>
    <h2>Properties<i class="caret"></i><em>»</em></h2>
  </section>
  <section class="panel groups">
    <div class="tools">
      <button class="big"><svg><use href="#group"/></svg>Group</button>
      <div class="col">
        <button class="tool" aria-label="Ungroup"><svg><use href="#ungroup"/></svg></button>
        <button class="tool" aria-label="Group edit"><svg><use href="#copy"/></svg></button>
        <button class="tool" aria-label="Group selection"><svg><use href="#gsel"/></svg></button>
      </div>
    </div>
    <h2>Groups<i class="caret"></i></h2>
  </section>
  <section class="panel utils">
    <div class="tools">
      <button class="big" aria-label="Measure"><svg><use href="#ruler"/></svg></button>
      <div class="col">
        <button class="tool" aria-label="Quick select"><svg><use href="#calc"/></svg></button>
        <button class="tool" aria-label="Select all"><svg><use href="#qsel"/></svg></button>
        <button class="tool" aria-label="Calculator"><svg><use href="#cut"/></svg></button>
      </div>
    </div>
    <h2>Utilities<i class="caret"></i></h2>
  </section>
  <section class="panel clip">
    <div class="tools">
      <button class="big" aria-label="Paste"><svg><use href="#paste"/></svg></button>
      <div class="col">
        <button class="tool" aria-label="Cut"><svg><use href="#cut"/></svg></button>
        <button class="tool" aria-label="Copy clip"><svg><use href="#cut"/></svg></button>
      </div>
    </div>
    <h2>Clipboard</h2>
  </section>
  <section class="panel viewp">
    <div class="tools">
      <button class="big" aria-label="Base"><svg><use href="#base"/></svg></button>
    </div>
    <h2>View<i class="caret"></i><em>»</em></h2>
  </section>
</main>

<nav class="files">
  <a class="start" href="#start">Start</a>
  <a href="#f1">250816 HSTKTC<svg><use href="#close"/></svg></a>
  <a href="#f2">KIẾN TRÚC<svg><use href="#close"/></svg></a>
  <a href="#f3">KẾT CẤU<svg><use href="#close"/></svg></a>
  <a class="on" href="#f4">ĐIỆN NƯỚC<svg><use href="#close"/></svg></a>
  <button class="add" aria-label="New drawing">+</button>
</nav>

<section class="canvas" aria-label="Drawing area">
  <svg class="drawing">
    <g transform="translate(0 -88)">
      <text class="heading" x="390" y="152">ĐIỆN NƯỚC</text>
      <g fill="none" stroke="#b5b8c9" stroke-width="1">
        <path d="M367.500 162.500h276.500v65h-276.500zM460.500 162v65M552.500 162v65"/>
        <path d="M367.500 227.500h184.500v65h-184.500zM460.500 227v65M367.500 292.500h93v65h-93zM367.500 357.500h368.500v65h-368.500zM460.500 357v65M552.500 357v65M644.500 357v65"/>
      </g>

      <svg class="page" x="368" y="162" viewBox="0 0 276 195">
        <use href="#sheet"/><use href="#plan"/>
        <path d="M150 45h22M180 50h18M206 37h30M142 60v60M120 55v40M190 60l12 6" stroke="#e8712a" stroke-width="3" stroke-dasharray="4 4"/>
        <path d="M210 32h28M212 41h24" stroke="#d7cd77" stroke-width="3" stroke-dasharray="3 3"/>
        <path d="M105 129h34v9h-34z" fill="#1414d6"/>
        <path d="M26 124h60v33H26zM60 124v33" fill="none" stroke="#cfcfcf" stroke-width="2"/><path d="M27 129h30v23H27z" fill="#8b8886"/><path d="M66 140h14" stroke="#fff" stroke-width="3"/><path d="M31 129v22" stroke="#c5533d" stroke-width="3"/>
      </svg>

      <svg class="page" x="460" y="162" viewBox="0 0 276 195">
        <use href="#sheet"/><use href="#plan"/>
        <g fill="none" stroke="#d7251d" stroke-width="2.500" stroke-dasharray="7 2">
          <path d="M106 40h60v48H106zM112 47h22v40h-22zM146 42h30v24h-30zM188 40h46v30h-46zM106 97h34v30h-34zM146 74h30v40h-30zM183 76h34v34h-34zM108 120h108M125 36v92M210 36v36M162 36v92M198 74v52"/>
        </g>
        <path d="M143 94h30M182 92h32" stroke="#8c281f" stroke-width="18" opacity=".6"/>
        <circle cx="163" cy="93" r="6" fill="#ffd91c"/><circle cx="201" cy="93" r="6" fill="#ffd91c"/>
        <path d="M106 56h5M124 62h5M154 58h5M198 55h5M222 60h5M122 108h5M162 122h5M232 44h5" stroke="#f0a03c" stroke-width="4"/>
        <path d="M25 130h66v27H25zM62 130v27" fill="#85817d" stroke="#c5c5c5" stroke-width="2"/><path d="M32 134v20M68 134v20" stroke="#c76a42" stroke-width="3"/><path d="M28 150h18" stroke="#dbc04b" stroke-width="3"/>
      </svg>

      <svg class="page" x="552" y="162" viewBox="0 0 276 195">
        <use href="#sheet"/>
        <path d="M58 32h88v42H58zM78 32v42M58 46h20M58 60h20" fill="none" stroke="#d5d5d5" stroke-width="3"/>
        <path d="M80 34h64v36H80z" fill="#3a2818" stroke="#b18b24" stroke-width="3"/>
        <path d="M84 48h60M84 56h66M84 65h66M92 46v26M104 34v38M116 46v26M128 46v26M140 46v26" stroke="#d32121" stroke-width="3"/>
        <path d="M111 26h20" stroke="#fff" stroke-width="4"/><path d="M106 26v20" stroke="#e03a2f" stroke-width="3"/>
        <path d="M58 76h84" stroke="#4462b2" stroke-width="4"/><path d="M60 42h14M60 58h10" stroke="#46ad3d" stroke-width="3"/>
        <path d="M164 52h70M178 45h16M188 57h46" stroke="#19b34a" stroke-width="4" stroke-dasharray="8 3"/><path d="M176 42h12M208 45h22M222 62h18" stroke="#d446dd" stroke-width="5"/><path d="M182 64h42M198 54v12" stroke="#e7e7e7" stroke-width="3" stroke-dasharray="10 4"/>
        <path d="M72 92h62v44H72z" fill="#26221d" stroke="#d5d5d5" stroke-width="3"/><path d="M97 94h36v40H97z" fill="#3d2919" stroke="#b1842a" stroke-width="2"/><path d="M99 108h30M99 118h30M106 95v36M120 95v36" stroke="#d32121" stroke-width="3"/><path d="M76 98h16M76 124h16" stroke="#38ba3b" stroke-width="3"/><path d="M95 86h22" stroke="#c06c61" stroke-width="3"/><path d="M78 139h54" stroke="#4462b2" stroke-width="4"/>
        <path d="M156 100h88v30h-88z" fill="none" stroke="#ddd" stroke-width="2"/><path d="M160 105h50M160 111h70M160 117h60M160 123h72" stroke="#f2f2f2" stroke-width="3"/>
      </svg>

      <svg class="page" x="368" y="227" viewBox="0 0 276 195">
        <use href="#sheet"/><use href="#plan"/>
        <path d="M142 27v70M102 31h48M132 30v22" stroke="#1d1fa8" stroke-width="5"/>
        <path d="M106 52l12-5 9 10-4 8h-16zM148 45l8-14 9 10-2 8zM128 94l8-8 12 10-6 7z" fill="#1fe02b"/>
        <path d="M92 45h9M116 87h9M164 24h10M172 30h4M180 60h8" stroke="#e48525" stroke-width="6"/>
        <path d="M110 30h18" stroke="#e87d7d" stroke-width="4"/>
        <use href="#legend" x="30" y="117" width="60" height="40"/><path d="M34 124v26" stroke="#3bce45" stroke-width="3"/>
      </svg>

      <svg class="page" x="460" y="227" viewBox="0 0 276 195">
        <use href="#sheet"/>
        <path d="M61 30h178v108H61zM122 30v108M180 30v66M61 96h178M180 96v42M61 64h119" fill="none" stroke="#c9c9c9" stroke-width="2.500"/>
        <path d="M84 36v26M94 40v18M74 60h42M84 72v22M98 70v20M72 92h42" stroke="#d6d9e0" stroke-width="3"/><path d="M78 46h10M92 50h12M78 80h12" stroke="#4a93b8" stroke-width="4"/><path d="M76 52h6M84 84h5M104 60h8" stroke="#a43fc6" stroke-width="4"/>
        <path d="M148 32v28M138 34h22M132 56h36M136 60h26" stroke="#f2f2f2" stroke-width="4"/><path d="M140 76h16v7h-16z" fill="none" stroke="#26bb73" stroke-width="5"/><path d="M130 91h34M126 70h12" stroke="#999" stroke-width="3"/>
        <path d="M206 44v46" stroke="#b238bc" stroke-width="6"/><path d="M200 50h12" stroke="#e05be7" stroke-width="7"/><path d="M186 38h46M216 58h18M216 70h16" stroke="#ccc" stroke-width="2"/><path d="M186 90h46" stroke="#73a14b" stroke-width="6"/>
        <path d="M70 108h44M90 100v26M78 132h30M98 110v16" stroke="#d2d2d2" stroke-width="3"/><path d="M92 114h14" stroke="#bd5d74" stroke-width="3"/>
        <path d="M184 102h26M184 108h50M184 114h44M184 120h48M184 126h50M184 132h40" stroke="#eee" stroke-width="3.500"/>
      </svg>

      <svg class="page" x="368" y="292" viewBox="0 0 276 195">
        <use href="#sheet"/><use href="#plan"/>
        <path d="M141 30v78M181 35v110" stroke="#c92128" stroke-width="3"/>
        <path d="M142 104h6M136 110h12M238 76h6" stroke="#ec4bb2" stroke-width="9"/><path d="M178 106h13" stroke="#341ee5" stroke-width="10"/>
        <path d="M192 98h22M196 88h20" stroke="#58c4cb" stroke-width="3"/>
        <use href="#legend" x="29" y="116" width="60" height="40"/><path d="M34 122v28" stroke="#c458c4" stroke-width="3"/><path d="M46 120h20" stroke="#d37b4f" stroke-width="2"/>
      </svg>

      <svg class="page" x="368" y="357" viewBox="0 0 276 195">
        <use href="#sheet"/><use href="#plan"/>
        <path d="M99 36v112M80 150h34M99 35h88M112 28v22M190 28v20M110 42h12M184 40h20M150 35v10" fill="none" stroke="#3bd031" stroke-width="4"/>
        <path d="M105 128h114" stroke="#ab262a" stroke-width="3"/>
        <use href="#legend" x="31" y="126" width="60" height="30"/><path d="M36 130v20" stroke="#44b04a" stroke-width="3"/><path d="M34 143h8" stroke="#cc382d" stroke-width="3"/>
      </svg>

      <svg class="page" x="460" y="357" viewBox="0 0 276 195">
        <use href="#sheet"/><use href="#plan"/>
        <path d="M108 32h76M108 32v12" fill="none" stroke="#7f37ab" stroke-width="5"/><path d="M130 30h12M202 38h22M206 20h46M214 27h38" stroke="#3999a0" stroke-width="3"/>
        <path d="M166 15l16 0 6 9-12 9-8-6z" fill="#541315" stroke="#cc2424" stroke-width="3"/><path d="M146 24h10" stroke="#ccc" stroke-width="3"/>
        <path d="M144 122h50M150 136h90M220 124v16" stroke="#43a69f" stroke-width="3" stroke-dasharray="14 4"/>
        <use href="#legend" x="27" y="116" width="72" height="40"/><path d="M36 124h10" stroke="#cc4040" stroke-width="3"/><path d="M36 133h10" stroke="#844fd0" stroke-width="3"/><path d="M36 142h10" stroke="#32a4ab" stroke-width="3"/>
      </svg>

      <svg class="page" x="552" y="357" viewBox="0 0 276 195">
        <use href="#sheet"/>
        <path d="M50 16h179v140H50zM50 50h179M50 80h179M50 107h179M75 16v91M106 16v140M142 16v140M176 16v140" fill="none" stroke="#a9a9ab" stroke-width="2"/>
        <path d="M54 44h16M80 43h22M114 46h24M148 48h20M182 44h38M54 74h16M80 76h22M114 73h24M148 76h20M184 78h40M54 102h18M80 101h22M112 102h26M82 147h22M112 147h26M148 146h24M188 148h34" stroke="#bd6269" stroke-width="4"/>
        <path d="M58 24l10 12M84 26h14M88 20v20M114 30h20M124 22v18M150 22l8 24M186 26h34v12h-34zM62 54v16M82 60h18M116 64h20M152 56l12 14M190 58l28 12M196 70l14-16M58 90l12 10M84 88l14 8M116 90h18M152 96h14M188 94h30M88 114l14 24M116 116l20 22M152 118l18 20M190 124h30M200 114l12 30" fill="none" stroke="#d7d9db" stroke-width="3"/>
        <path d="M58 34h12M92 34h10M86 66h12M154 64h12" stroke="#57ad5b" stroke-width="3"/><path d="M118 34h16M92 90h10M190 66h10" stroke="#a05bb0" stroke-width="4"/>
        <path d="M86 130h18M118 126h20M120 136h18M154 126h16" stroke="#3b86cf" stroke-width="7"/>
        <path d="M51 108h24v46H51z" fill="#4f6f37"/><path d="M52 112l22 10M52 124l22 8M52 138l22 8M58 110l12 40" stroke="#dbe8c1" stroke-width="3"/><path d="M50 155h27" stroke="#c3c444" stroke-width="5"/>
      </svg>

      <svg class="page" x="644" y="357" viewBox="0 0 276 195">
        <use href="#sheet"/>
        <path d="M52 37h50v42H52zM128 22h46v30h-46zM206 22h46v30h-46zM160 104h28v22h-28zM222 104h28v22h-28z" fill="#1b2388"/>
        <path d="M62 26v64M76 20v74M90 26v64M44 50h66M44 66h66M140 22v32M156 22v32M218 22v32M234 22v32" stroke="#2c38ca" stroke-width="4"/>
        <path d="M56 22h46M40 38v42M112 36v32M122 18v38M124 60h52M200 18v38M204 60h48M66 88h36M118 106v30M122 104h26v28h-26zM215 104v30M255 104v30M166 98v38" fill="none" stroke="#e3e7e9" stroke-width="4" stroke-dasharray="7 4"/>
        <path d="M60 18h38M46 34v50M118 20v36M178 20v36M130 55h44M196 20v36M257 20v36M206 55h46M36 105v32M84 105v32M44 138h38M150 106v28M155 110h34M210 120h48M155 124h30M122 118h26M34 60h12" fill="none" stroke="#2dd33e" stroke-width="3" stroke-dasharray="8 2"/>
        <path d="M42 107h38v26H42z" fill="#342323" stroke="#db2321" stroke-width="3"/><path d="M46 120h30" stroke="#e1d9d7" stroke-width="4"/><path d="M132 30h10M212 30h10M178 110v18M238 110v18" stroke="#bd3d7b" stroke-width="3"/><path d="M127 118h16" stroke="#4ab9a4" stroke-width="5"/>
        <path d="M54 95h38M148 69h22M226 67h24M50 148h24M110 148h22M164 148h22M222 148h22" stroke="#20ea31" stroke-width="7"/><path d="M214 82h38M214 88h20M236 94h18" stroke="#238743" stroke-width="3"/>
      </svg>

      <path d="M835.500 295v48M811 319.500h48" stroke="#c8ccd0"/><path d="M833.500 317.500h4v4h-4z" fill="#222933" stroke="#c8ccd0"/>
      <g fill="none" stroke="#bfc3c8"><path d="M10.500 465v24.500H35M8.500 487.500h4v4h-4zM11 456l3 4v4M17 456l-3 4M37 483l6 6M43 483l-6 6"/></g>
    </g>
  </svg>
  <p class="viewlabel">[−][Top][2D Wireframe]</p>
  <div class="docwin">
    <button class="ic" aria-label="Minimize drawing"><svg><use href="#min"/></svg></button>
    <button class="ic" aria-label="Restore drawing"><svg><use href="#restore"/></svg></button>
    <button class="ic" aria-label="Close drawing"><svg><use href="#close"/></svg></button>
  </div>
  <svg class="cube" viewBox="0 0 70 70" role="img" aria-label="View cube">
    <circle cx="35" cy="35" r="26.500" fill="none" stroke="#495059" stroke-width="7"/>
    <rect x="22" y="22" width="26" height="26" fill="#babcbd"/><rect x="27" y="27" width="16" height="16" fill="#a3aaae"/>
    <text class="top" x="35" y="37">TOP</text>
    <g class="dirs"><text x="35" y="12">N</text><text x="35" y="68">S</text><text x="7" y="39">W</text><text x="63" y="39">E</text></g>
  </svg>
  <button class="wcs">WCS <span>▿</span></button>
  <svg class="navbar" viewBox="0 0 16 105" role="img" aria-label="Navigation bar">
    <rect width="16" height="105" rx="2" fill="#62666a"/>
    <g fill="none" stroke="#41474e"><circle cx="13" cy="2.500" r="1.500"/><circle cx="13" cy="102.500" r="1.500"/><circle cx="8" cy="15" r="5.500"/><path d="M5 12h6v6H5zM5 40l-2-4 2-1 1 2v-6h1v5-6h2v6-5h1v5l1-4h1v5l-1 3zM2 45l9 10M11 45l-9 9M8 61v14M2 69c2-4 11-4 12 0-2 4-10 4-12 0M2 84h12v4H2zM2 90h9v5H2z"/><circle cx="11" cy="52" r="2.500"/></g>
    <path d="M7 25h3l-1 2zM7 59h3l-1 2zM7 78h3l-1 2zM6 90l3 2-3 2z" fill="#33383f"/>
  </svg>
  <div class="cmd">
    <ol class="history"><li>Command: _saveas</li><li>Command: *Cancel*</li><li>Command: *Cancel*</li></ol>
    <div class="cmdline">
      <div class="cmdtools"><i class="grip"></i><button class="ic" aria-label="Close command line"><svg><use href="#close"/></svg></button><button class="ic" aria-label="Customize"><svg><use href="#wrench"/></svg></button></div>
      <div class="cmdbox"><svg><use href="#prompt"/></svg><i class="caret"></i><input type="text" placeholder="Type a command" aria-label="Command"><i class="caret up"></i></div>
    </div>
  </div>
</section>

<footer class="status">
  <nav class="layouts"><a class="on" href="#model">Model</a><a href="#l1">Layout1</a><a href="#l2">Layout2</a><button aria-label="New layout">+</button></nav>
  <div class="toggles">
    <button class="model">MODEL</button>
    <button aria-label="Grid"><svg><use href="#grid"/></svg></button>
    <button aria-label="Snap"><svg><use href="#dots"/></svg></button><i class="caret"></i>
    <button class="sep" aria-label="Ortho"><svg><use href="#ortho"/></svg></button>
    <button aria-label="Polar"><svg><use href="#polar"/></svg></button><i class="caret"></i>
    <button aria-label="Isometric"><svg><use href="#iso"/></svg></button><i class="caret"></i>
    <button class="on" aria-label="Object tracking"><svg><use href="#angle"/></svg></button>
    <button class="on" aria-label="Object snap"><svg><use href="#osnap"/></svg></button><i class="caret"></i>
    <button class="on" aria-label="Annotation visibility"><svg><use href="#anno"/></svg></button>
    <button aria-label="Auto scale"><svg><use href="#anno"/></svg></button>
    <button aria-label="Annotation scale"><svg><use href="#anno2"/></svg></button>
    <button>1:1</button><i class="caret"></i>
    <button class="sep" aria-label="Workspace"><svg><use href="#gear"/></svg></button><i class="caret"></i>
    <button class="sep" aria-label="Monitor"><svg><use href="#plus"/></svg></button>
    <button class="sep" aria-label="Isolate objects"><svg><use href="#shapes"/></svg></button>
    <button class="sep" aria-label="Plot status"><svg><use href="#print"/></svg></button>
    <button aria-label="Standards"><svg><use href="#checks"/></svg></button>
    <button class="sep" aria-label="Clean screen"><svg><use href="#tray"/></svg></button>
    <button aria-label="Customization"><svg><use href="#burger"/></svg></button>
  </div>
</footer>

<footer class="taskbar">
  <button class="winkey" aria-label="Start"><svg><use href="#win"/></svg></button>
  <label class="find"><svg><use href="#find"/></svg><input type="text" placeholder="Type here to search"><svg class="sparkle" viewBox="0 0 32 14"><path d="M13 0l2 5 5 2-5 2-2 5-2-5-5-2 5-2z" fill="#f7c32e"/><path d="M25 5l1 3 3 1-3 1-1 3-1-3-3-1 3-1z" fill="#f1c468"/><path d="M3 9l1 2 2 1-2 1-1 1-1-1-2-1 2-1z" fill="#2a8bd0"/><circle cx="22" cy="2" r="1" fill="#e2694e"/><circle cx="31" cy="12" r="1" fill="#56ac6a"/></svg></label>
  <div class="apps">
    <button aria-label="Task view"><svg class="small"><use href="#taskview"/></svg></button>
    <button aria-label="Copilot"><svg><use href="#copilot"/></svg></button>
    <button aria-label="Edge"><svg><use href="#edge"/></svg></button>
    <button class="open" aria-label="File Explorer"><svg><use href="#folder"/></svg></button>
    <button class="open on" aria-label="AutoCAD"><svg><use href="#acad"/></svg></button>
    <button class="open" aria-label="Chrome"><svg><use href="#chrome"/></svg></button>
    <button class="open" aria-label="Chrome, second profile"><svg><use href="#chrome"/></svg></button>
    <button class="open" aria-label="Photoshop"><b class="ps">Ps</b></button>
  </div>
  <div class="systray">
    <button class="weather"><svg><use href="#weather"/></svg><span>28°C</span><span>Nhiều mây</span></button>
    <svg class="up" viewBox="0 0 16 16"><path d="M2 11l6-6 6 6" fill="none" stroke="#e5e5e5" stroke-width="2"/></svg>
    <svg><use href="#wifi"/></svg><svg><use href="#sound"/></svg>
    <span class="lang">ENG</span>
    <time>8:43 PM<br>9/16/2025</time>
    <button class="notes" aria-label="Notifications"><svg><use href="#note"/></svg><b>1</b></button>
  </div>
</footer>

<aside class="balloon" role="status">
  <header><svg><use href="#info"/></svg><h3>Plot and Publish Job Complete</h3><button aria-label="Close notification"><svg><use href="#close"/></svg></button></header>
  <p>No errors or warnings found</p>
  <a href="#details">Click to view plot and publish details...</a>
</aside>

<p class="mark mark-top">KhoBanVe.vn</p>
<p class="mark mark-bottom">Copyright © KhoBanVe.vn</p>
<svg class="brand" viewBox="0 0 84 42" role="img" aria-label="KHOBANVE">
  <path d="M32 17l10-6 8 4 17-13 16 13v5h-1v20H4V18h27z" fill="#fff" stroke="#fff" stroke-width="3" stroke-linejoin="round"/>
  <path d="M33 16l9-4 9 4L67 4l15 11" fill="none" stroke="#f07b22" stroke-width="2"/><path d="M76 9v6" stroke="#f07b22" stroke-width="2"/>
  <text x="5" y="34"><tspan class="kho">KHO</tspan><tspan class="ban">BẢNVẼ</tspan></text>
</svg>
</body>
</html>
```
FILE: styles.css
```css
* { box-sizing: border-box; margin: 0; padding: 0; }
html, body { height: 100%; }
body {
  display: flex;
  flex-direction: column;
  min-height: 100vh;
  overflow: hidden;
  position: relative;
  background: #222933;
  color: #d3d7dc;
  font: 6px/7px Roboto, "Noto Sans", sans-serif;
}
button, input, select { font: inherit; color: inherit; background: none; border: 0; outline: 0; }
button { display: flex; align-items: center; justify-content: center; white-space: nowrap; }
a { color: inherit; text-decoration: none; white-space: nowrap; }
i, em { font-style: normal; }
svg { display: block; flex: none; width: 9px; height: 9px; }
.sprite { position: absolute; width: 0; height: 0; }
h1, h2, h3 { font-size: inherit; font-weight: 400; }

.caret { flex: none; width: 3px; height: 2px; background: #c6cbd1; clip-path: polygon(0 0, 100% 0, 50% 100%); }
.caret.up { transform: rotate(180deg); background: #474c53; }
.caret.bar { width: 5px; height: 3px; }
.dim { color: #68717d; }
.caret.dim { background: #68717d; }
.ic { width: 12px; height: 12px; }

/* Title bar */
.titlebar { display: flex; align-items: center; height: 12px; flex: none; }
.quick { display: flex; align-items: center; flex: 0 0 364px; }
.quick .app { width: 13px; }
.quick .caret + .ic { margin-left: 4px; }
.quick .app + .caret + .ic { margin-left: 6px; }
.quick .caret.bar { margin-left: 4px; }
.share { gap: 2px; margin-left: 3px; color: #74b4dd; }
.titlebar .ic svg { width: 10px; height: 10px; }
.title { display: flex; gap: 6px; color: #cfd3d8; }
.account { display: flex; align-items: center; justify-content: flex-end; flex: 1; color: #cdd2d8; }
.account .caret { margin-right: 4px; }
.tri { width: 3px; height: 4px; background: #fff; clip-path: polygon(0 0, 100% 50%, 0 100%); margin-right: 2px; }
.keyword { width: 88px; height: 10px; margin-right: 2px; padding: 0 2px; background: #454f61; font-style: italic; flex: none; }
.keyword::placeholder { color: #a6afbd; opacity: 1; }
.account .ic { flex: none; }
.account .ic svg { width: 8px; height: 8px; }
.sign { gap: 3px; margin-right: 24px; }
.sign svg { width: 8px; height: 8px; }
.rule { width: 1px; height: 9px; margin-right: 2px; background: #535b67; }
.wincontrols { display: flex; margin-left: 28px; }
.wincontrols .ic svg { width: 7px; height: 7px; }

/* Ribbon tabs */
.menu { display: flex; align-items: stretch; height: 12px; flex: none; padding-left: 2px; color: #aeb4bc; }
.menu a { padding: 3px 5px 0; }
.menu .on { background: #3b4453; color: #f1f3f5; padding-right: 4px; }
.ribbon-toggle { gap: 3px; margin-left: 8px; }
.ribbon-toggle b { width: 8px; height: 4px; background: #e2e4e6; }

/* Ribbon panels */
.ribbon { display: flex; height: 49px; flex: none; background: #3b4453; margin-right: 1px; }
.panel { display: flex; flex-direction: column; flex: none; border-right: 1px solid #29303b; }
.tools { display: flex; flex: 1; padding-top: 2px; }
.panel h2 { display: flex; align-items: center; justify-content: center; gap: 3px; height: 11px; position: relative; color: #cdd2d8; }
.panel h2 em { position: absolute; right: 2px; }
.col { display: flex; flex-direction: column; }
.tool { height: 12px; justify-content: flex-start; gap: 2px; }
.big { flex-direction: column; justify-content: flex-start; padding-top: 1px; text-align: center; white-space: normal; }
.big svg { width: 18px; height: 18px; }
.big .caret { margin-top: 2px; }
.tool .caret { margin-left: auto; }
.combo { display: flex; align-items: center; height: 10px; margin: 1px 0; padding: 0 2px; background: #4a5567; }
.combo select { appearance: none; flex: 1; min-width: 0; height: 10px; color: #e2e5e8; }
.combo svg { width: 8px; height: 8px; }
.swatch { width: 8px; height: 8px; background: #e5110f; border: 1px solid #551717; }

.draw { width: 112px; }
.draw .tools { padding-left: 1px; }
.draw .big { width: 22px; }
.draw .big:nth-child(2) { width: 23px; }
.draw .big:nth-child(3) { width: 24px; }
.draw .col { width: 17px; }
.modify { width: 124px; }
.modify .tools { padding-left: 2px; }
.modify .col:nth-child(1) { width: 36px; }
.modify .col:nth-child(2) { width: 34px; }
.modify .col:nth-child(3) { width: 31px; margin-right: 5px; }
.annotation { width: 97px; }
.annotation .big { width: 23px; }
.annotation .big:nth-child(2) { width: 31px; }
.annotation .big:nth-child(2) svg { width: 20px; }
.annotation .col { width: 39px; padding-left: 1px; }
.layer { width: 135px; }
.layer .big { width: 31px; }
.layer .col { width: 102px; }
.layer .combo svg { margin-right: 2px; }
.layer .combo select { padding-left: 3px; }
.strip { display: flex; padding-left: 1px; }
.strip .tool { min-width: 12px; }
.block { width: 80px; }
.block .big { width: 22px; }
.block .col { width: 54px; }
.props { width: 131px; }
.props .big { width: 31px; }
.prop { display: flex; align-items: center; gap: 1px; }
.prop .combo { width: 88px; }
.prop .swatch { margin: 0 5px; }
.prop .stroke { width: 32px; height: 1px; background: #c9ced4; }
.groups { width: 34px; }
.groups .big { width: 21px; }
.utils { width: 48px; }
.utils .big { width: 34px; }
.clip { width: 39px; }
.clip .big { width: 26px; }
.viewp { width: 33px; border: 0; }
.viewp .big { width: 31px; }
.viewp h2 { justify-content: flex-start; padding-left: 3px; }

/* Drawing file tabs */
.files { display: flex; height: 15px; flex: none; padding-top: 2px; border-bottom: 2px solid #363e4c; color: #abb1ba; }
.files a { display: flex; align-items: center; justify-content: space-between; width: 61px; padding: 0 5px; background: #2a313d; clip-path: polygon(3px 0, 58px 0, 100% 100%, 0 100%); }
.files a.start { width: 71px; padding-left: 16px; clip-path: polygon(3px 0, 68px 0, 100% 100%, 0 100%); }
.files svg { width: 6px; height: 6px; }
.files a.on { background: #3b4453; color: #fff; font-weight: 700; }
.files .add { width: 14px; margin-left: 2px; background: #2a313d; border-radius: 3px; font-size: 8px; }

/* Drawing area */
.canvas { flex: 1; position: relative; min-height: 0; overflow: hidden; background: #212830; }
.drawing { position: absolute; inset: 0; width: 100%; height: 100%; }
.page { width: 92px; height: 65px; }
.heading { font: 14px "Liberation Sans", sans-serif; fill: #f0f1f2; }
.viewlabel { padding: 3px 2px; color: #dadde0; }
.docwin { position: absolute; top: 1px; right: 2px; display: flex; color: #e4e6e8; }
.docwin .ic { width: 10px; }
.docwin svg { width: 7px; height: 7px; }
.cube { position: absolute; top: 17px; right: 6px; width: 70px; height: 70px; overflow: visible; }
.cube text { text-anchor: middle; font: 700 10px "Liberation Sans", sans-serif; fill: #b4b8bc; }
.cube .top { font-size: 6px; fill: #4c545d; }
.wcs { position: absolute; top: 95px; right: 29px; width: 24px; height: 9px; border-radius: 2px; background: #a3a4b4; color: #eceef3; justify-content: space-between; padding: 0 2px; }
.navbar { position: absolute; top: 116px; right: 2px; width: 16px; height: 105px; }
.cmd { position: absolute; left: 195px; right: 194px; bottom: 11px; font: 6px/8px "Liberation Mono", monospace; }
.history { list-style: none; display: flex; flex-direction: column; align-items: flex-start; gap: 2px; padding: 0 0 1px 31px; }
.history li { background: #51565c; color: #d8dadc; }
.cmdline { display: flex; height: 13px; }
.cmdtools { display: flex; align-items: center; width: 28px; background: #2b323d; color: #d0d4d9; }
.cmdtools .ic { width: 11px; }
.cmdtools svg { width: 7px; height: 7px; }
.grip { width: 2px; height: 9px; margin-left: 2px; background: repeating-linear-gradient(#9aa1aa 0 1px, transparent 1px 2px); }
.cmdbox { display: flex; align-items: center; flex: 1; gap: 2px; padding: 0 2px; background: #bebfc1; border-top: 1px solid #6c7179; }
.cmdbox > svg { width: 9px; height: 8px; }
.cmdbox .caret { background: #474c53; }
.cmdbox input { flex: 1; padding-left: 1px; font-style: italic; }
.cmdbox input::placeholder { color: #61656b; opacity: 1; }

/* Layout tabs and status toggles */
.status { display: flex; align-items: flex-start; justify-content: space-between; height: 15px; flex: none; background: #222a35; border-top: 1px solid #303947; }
.layouts { display: flex; padding-left: 5px; color: #aab1ba; }
.layouts a { height: 9px; padding: 1px 6px; background: #2b333f; clip-path: polygon(0 0, 100% 0, calc(100% - 3px) 100%, 3px 100%); }
.layouts .on { background: #3f4959; color: #fff; font-weight: 700; }
.layouts button { width: 12px; height: 9px; background: #2b333f; font-size: 8px; }
.toggles { display: flex; align-items: center; height: 13px; background: #2b333f; color: #c8cdd3; }
.toggles button { width: 12px; height: 12px; }
.toggles .model { width: 25px; font-weight: 500; color: #e6e8ea; }
.toggles .caret { margin: 0 2px 0 3px; }
.toggles .sep { width: 13px; border-left: 1px solid #1d242d; }
.toggles .on { background: #4c80b4; color: #fff; }

/* Desktop taskbar */
.taskbar { display: flex; align-items: stretch; height: 20px; flex: none; background: linear-gradient(90deg, #33241e, #2b2424 25%, #3b2f2d 65%, #241f1f); font-size: 7px; line-height: 8px; color: #f1f1f1; }
.winkey { width: 24px; }
.find { display: flex; align-items: center; gap: 5px; width: 142px; padding: 0 5px; background: #f2f2f1; color: #333; }
.find input { flex: 1; min-width: 0; }
.find input::placeholder { color: #444; opacity: 1; }
.find .sparkle { width: 32px; height: 14px; }
.apps { display: flex; }
.apps button { width: 24px; border-bottom: 2px solid transparent; }
.apps button svg { width: 12px; height: 12px; }
.apps button svg.small { width: 8px; height: 8px; }
.apps .open { border-color: #86b4d6; background-clip: padding-box; }
.apps .on { background: #55504f; }
.ps { width: 11px; height: 10px; background: #07274a; color: #4ba9f1; font-size: 6px; line-height: 10px; border-radius: 2px; }
.systray { display: flex; align-items: center; gap: 4px; margin-left: auto; padding-right: 8px; }
.weather { gap: 4px; margin-right: 7px; }
.weather svg { width: 13px; height: 12px; }
.systray > svg { width: 8px; height: 8px; }
.lang { font-size: 6px; }
.systray time { width: 30px; font-size: 6px; text-align: center; }
.notes { position: relative; width: 16px; }
.notes svg { width: 10px; height: 10px; }
.notes b { position: absolute; right: 0; bottom: 0; width: 7px; height: 7px; border-radius: 50%; background: #4b4443; font-size: 6px; line-height: 7px; font-weight: 400; }

/* Plot notification */
.balloon { position: absolute; right: 15px; bottom: 37px; width: 122px; height: 39px; padding: 3px 4px 0 8px; border-radius: 6px; background: #ffffe4; color: #1b1b1b; }
.balloon::after { content: ""; position: absolute; left: 84px; top: 38px; width: 11px; height: 9px; background: #ffffe4; clip-path: polygon(0 0, 100% 0, 90% 100%); }
.balloon header { display: flex; align-items: center; gap: 3px; height: 10px; }
.balloon header svg { width: 8px; height: 8px; }
.balloon h3 { flex: 1; font-weight: 700; white-space: nowrap; }
.balloon header button { width: 8px; height: 8px; border: 1px solid #777; }
.balloon header button svg { width: 6px; height: 6px; }
.balloon p { margin: 3px 0; white-space: nowrap; }
.balloon a { color: #2a2ad0; text-decoration: underline; font-family: "Liberation Sans", sans-serif; }

/* Overlaid brand marks */
.mark { position: absolute; font: 700 21px/24px "Liberation Sans", sans-serif; color: #c3c3c3; text-shadow: 1px 1px 1px #15181c; white-space: nowrap; pointer-events: none; }
.mark-top { top: 38px; right: 118px; }
.mark-bottom { bottom: 15px; left: 50%; transform: translateX(-50%); }
.brand { position: absolute; top: 10px; right: 10px; width: 84px; height: 42px; overflow: visible; }
.brand text { font: 700 13px "Liberation Sans", sans-serif; }
.kho { fill: #f07b22; }
.ban { fill: #25272d; }
```
